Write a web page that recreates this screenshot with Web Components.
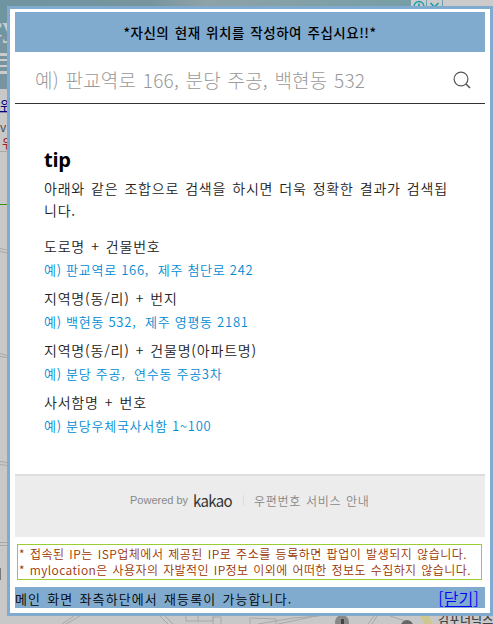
<!DOCTYPE html>
<html lang="ko">
<head>
<meta charset="utf-8">
<title>mylocation</title>
<style>
  html, body { margin: 0; height: 100%; }
  body {
    position: relative;
    width: 493px;
    height: 624px;
    overflow: hidden;
    background: #c8c8c8;
    font-family: "Noto Sans CJK KR", "Liberation Sans", sans-serif;
  }
  .first { letter-spacing: .5px; }
</style>
</head>
<body>
<map-backdrop></map-backdrop>
<location-popup>
  <popup-title slot="title">*자신의 현재 위치를 작성하여 주십시요!!*</popup-title>
  <search-bar placeholder="예) 판교역로 166, 분당 주공, 백현동 532"></search-bar>
  <search-tips>
    <span slot="heading">tip</span>
    <span slot="lead">아래와 같은 조합으로 검색을 하시면 더욱 정확한 결과가 검색됩<br>니다.</span>
    <tip-item label="도로명 + 건물번호">예) 판교역로 166,&nbsp; 제주 첨단로 242</tip-item>
    <tip-item label="지역명(동/리) + 번지">예) 백현동 532,&nbsp; 제주 영평동 2181</tip-item>
    <tip-item label="지역명(동/리) + 건물명(아파트명)">예) 분당 주공,&nbsp; 연수동 주공3차</tip-item>
    <tip-item label="사서함명 + 번호">예) 분당우체국사서함 1~100</tip-item>
  </search-tips>
  <powered-by>우편번호 서비스 안내</powered-by>
  <notice-box>
    <div class="first">* 접속된 IP는 ISP업체에서 제공된 IP로 주소를 등록하면 팝업이 발생되지 않습니다.</div>
    <div>* mylocation은 사용자의 자발적인 IP정보 이외에 어떠한 정보도 수집하지 않습니다.</div>
  </notice-box>
  <popup-footer>메인 화면 좌측하단에서 재등록이 가능합니다.</popup-footer>
</location-popup>

<script>
function define(name, html, setup) {
  const template = document.createElement('template');
  template.innerHTML = html;
  customElements.define(name, class extends HTMLElement {
    constructor() {
      super();
      this.attachShadow({ mode: 'open' }).appendChild(template.content.cloneNode(true));
    }
    connectedCallback() {
      if (setup) setup(this, this.shadowRoot);
    }
  });
}

// dimmed page behind the popup
define('map-backdrop', `
  <style>
    :host { position: absolute; inset: 0; }
    svg { display: block; }
  </style>
  <svg width="493" height="624" viewBox="0 0 493 624">
    <defs>
      <linearGradient id="banner" x1="0" x2="1">
        <stop offset="0" stop-color="#6f95a0"/>
        <stop offset=".36" stop-color="#76949e"/>
        <stop offset=".5" stop-color="#8ea2a7"/>
        <stop offset="1" stop-color="#769ea7"/>
      </linearGradient>
    </defs>
    <rect width="493" height="624" fill="#c8c8c8"/>
    <rect width="411" height="89" fill="url(#banner)"/>
    <rect y="35" width="8" height="54" fill="#7795a0"/>
    <text x="-11" y="37" font-family="Liberation Serif, serif" font-weight="bold" font-size="30" fill="#c8cccd">cy</text>
    <g fill="#c8cccd">
      <rect y="53" width="7" height="3"/><rect y="59" width="7" height="2"/>
      <rect y="65" width="7" height="2"/><rect y="71" width="7" height="3"/>
    </g>
    <g font-size="13">
      <text x="0" y="110" fill="#000080" text-decoration="underline">위</text>
      <text x="0" y="132" font-size="12" fill="#4c4c4c">v</text>
      <text x="2" y="148" fill="#a02020">위</text>
    </g>
    <g stroke="#a8a8a8" fill="none">
      <path d="M0 151.500h7M0 248.500l7 1.500M0 251.500l7 1.500M0 353.500l7 2M0 356.500l7 1M0 461.500l7 1M0 464.500l7 1M0 542.500h7M0 545.500h7"/>
      <path d="M62 624l12-8M66 624l14-8M160 616l8 8M165 616l8 8M186 616v5h27v-5M198 616v5M213 624v-7h8v7M250 624v-6l26 1v5M258 624l35-6 26-2M278 624l38-8M368 624l6-8M372 624l5-8M390 616l18 6"/>
    </g>
    <path d="M0 204.500h7" stroke="#339500"/>
    <rect y="568" width="1" height="12" fill="#777"/>
    <rect x="411" width="82" height="7" fill="#cbcbcb"/>
    <path d="M426.500 0v7M442.500 0v7" stroke="#70a0b0"/>
    <g stroke="#179eac" fill="none">
      <circle cx="419" cy="6.500" r="5" stroke-width="1.300"/>
      <path d="M419 3.500v3M430.500 3l4 4M438.500 3l-4 4" stroke-width="1.700"/>
    </g>
    <circle cx="342" cy="622" r="7" fill="#888"/><rect x="341" y="619" width="3" height="5" fill="#444"/>
    <circle cx="407" cy="626" r="6" fill="#666"/>
    <path d="M420 616h9l4 8h-9z" fill="#cfc791"/>
    <text x="438" y="625" font-size="12" font-weight="500" fill="#444">김포너딕스</text>
  </svg>`);

define('location-popup', `
  <style>
    :host {
      box-sizing: border-box;
      position: absolute;
      left: 7px;
      top: 6px;
      width: 486px;
      height: 610px;
      display: flex;
      flex-direction: column;
      padding: 3px 5px;
      border: 3px solid #80abcf;
      background: #fff;
    }
  </style>
  <slot name="title"></slot>
  <slot></slot>`);

define('popup-title', `
  <style>
    :host {
      flex: none;
      height: 40px;
      background: #80abcf;
      color: #000;
      font-size: 13.5px;
      font-weight: 500;
      line-height: 40px;
      text-align: center;
      white-space: nowrap;
      letter-spacing: .5px;
      word-spacing: 1.2px;
    }
  </style>
  <slot></slot>`);

define('search-bar', `
  <style>
    :host {
      box-sizing: border-box;
      flex: none;
      display: flex;
      align-items: center;
      justify-content: space-between;
      height: 52px;
      padding: 4px 14px 0 20px;
      border-bottom: 1px solid #333;
      color: #999;
      font-size: 19px;
      font-weight: 300;
      white-space: nowrap;
      letter-spacing: .2px;
      word-spacing: 1.1px;
    }
    svg { flex: none; }
  </style>
  <span></span>
  <svg width="18" height="18" viewBox="0 0 18 18" fill="none" stroke="#555">
    <circle cx="8" cy="8" r="6.900" stroke-width="1.200"/>
    <path d="M13 13l4 4" stroke-width="1.600"/>
  </svg>`, (host, root) => {
  root.querySelector('span').textContent = host.getAttribute('placeholder');
});

define('search-tips', `
  <style>
    :host {
      box-sizing: border-box;
      flex: none;
      display: block;
      height: 370px;
      padding: 43px 29px 0;
      color: #222;
      font-weight: 350;
    }
    .heading {
      height: 26px;
      color: #000;
      font: bold 20px/26px "Open Sans", "Noto Sans", sans-serif;
      letter-spacing: -.3px;
    }
    .lead {
      margin: 4px 0 13px;
      font-size: 14px;
      line-height: 22px;
      white-space: nowrap;
      letter-spacing: .8px;
      word-spacing: 1.3px;
    }
  </style>
  <div class="heading"><slot name="heading"></slot></div>
  <div class="lead"><slot name="lead"></slot></div>
  <slot></slot>`);

define('tip-item', `
  <style>
    :host {
      display: block;
      height: 52px;
      white-space: nowrap;
    }
    .label { font-size: 14px; line-height: 24px; letter-spacing: .8px; word-spacing: 1.4px; }
    .example { color: #008bd3; font-size: 13px; line-height: 24px; letter-spacing: .75px; word-spacing: -.1px; }
  </style>
  <div class="label"></div>
  <div class="example"><slot></slot></div>`, (host, root) => {
  root.querySelector('.label').textContent = host.getAttribute('label');
});

define('powered-by', `
  <style>
    :host {
      box-sizing: border-box;
      flex: none;
      display: flex;
      align-items: center;
      height: 63px;
      padding: 0 0 13px 115px;
      border-top: 2px solid #ddd;
      background: #ececec;
      color: #888;
      font-size: 12px;
      white-space: nowrap;
    }
    .by { font: 11px "Liberation Sans", sans-serif; }
    .brand { width: 38px; margin-left: 5px; color: #333; font: 400 15px "Noto Sans CJK KR", sans-serif; letter-spacing: -.7px; }
    i { width: 1px; height: 11px; margin: 0 10px 0 12px; background: #dcdcdc; }
    .link { font-weight: 350; letter-spacing: .7px; word-spacing: .8px; }
  </style>
  <span class="by">Powered by</span>
  <span class="brand">kakao</span>
  <i></i>
  <span class="link"><slot></slot></span>`);

define('notice-box', `
  <style>
    :host {
      box-sizing: border-box;
      flex: none;
      display: block;
      width: 465px;
      height: 36px;
      margin: 7px 0 7px 2px;
      padding: 1px 1px;
      border: 1px solid #9acd32;
      color: #993300;
      font-size: 12px;
      font-weight: 350;
      line-height: 16px;
      white-space: nowrap;
      letter-spacing: .42px;
      word-spacing: 1px;
    }
  </style>
  <slot></slot>`);

define('popup-footer', `
  <style>
    :host {
      flex: none;
      display: flex;
      justify-content: space-between;
      height: 21px;
      padding-right: 6px;
      background: #80abcf;
      color: #000;
      font-size: 13px;
      font-weight: 350;
      line-height: 23px;
      white-space: nowrap;
      letter-spacing: 1.1px;
      word-spacing: 1.4px;
    }
    a { color: #00f; font-size: 16px; letter-spacing: .2px; text-decoration: underline; }
  </style>
  <span><slot></slot></span>
  <a>[닫기]</a>`);
</script>
</body>
</html>
